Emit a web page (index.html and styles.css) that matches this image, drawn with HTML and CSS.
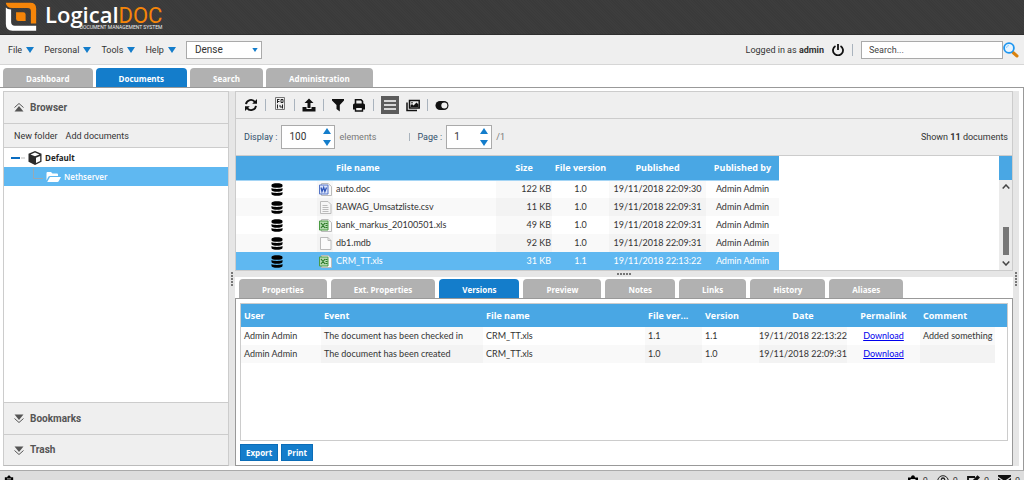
FILE: index.html
```html
<!DOCTYPE html>
<html lang="en">
<head>
<meta charset="utf-8">
<title>LogicalDOC</title>
<link rel="stylesheet" href="styles.css">
</head>
<body>
<svg class="defs" width="0" height="0" aria-hidden="true">
  <symbol id="caret" viewBox="0 0 8 6"><path d="M0 0h8L4 6z" fill="#147dcb"/></symbol>
  <symbol id="up" viewBox="0 0 8 6"><path d="M0 6h8L4 0z" fill="#147dcb"/></symbol>
  <symbol id="chev" viewBox="0 0 10 9"><path d="M.5 4.500L5 .5l4.500 4" fill="none" stroke="#555"/><path d="M.5 8.500L5 3l4.500 5.500z" fill="#555"/></symbol>
  <symbol id="db" viewBox="0 0 12 13"><path d="M.5 2C.5.8 3 .2 6 .2s5.500.6 5.500 1.800v1.200C11.500 4.200 9 4.800 6 4.800S.5 4.200.5 3.200zM.5 5c2 1.200 9 1.200 11 0v2c0 1.200-2.500 1.800-5.500 1.800S.5 8.200.5 7zM.5 9c2 1.200 9 1.200 11 0v2c0 1.200-2.500 1.800-5.500 1.800S.5 12.200.5 11z"/></symbol>
  <symbol id="page" viewBox="0 0 13 13"><path d="M1.500.5h7.500l3 3v9H1.500z" fill="#fbfbfb" stroke="#bbb"/><path d="M9 .5v3h3" fill="none" stroke="#bbb"/></symbol>
  <symbol id="doc" viewBox="0 0 13 13"><path d="M2.500.5H9l3.500 3v9h-10z" fill="#fafafa" stroke="#bbb"/><path d="M.5 2h8.500v9H.5z" fill="#dce5fb" stroke="#5475c7"/><path d="M2 4.500l1 4 1.700-4 1.200 4 1.600-4" fill="none" stroke="#2f55b8" stroke-width="1.300"/></symbol>
  <symbol id="xls" viewBox="0 0 13 13"><path d="M2.500.5H9l3.500 3v9h-10z" fill="#fafafa" stroke="#bbb"/><path d="M.5 2h8.500v9H.5z" fill="#b4dab0" stroke="#4b9b43"/><path d="M2 4l4 5M6 4L2 9M6.500 4.500h2M6.500 6.500h2M6.500 8.500h2" fill="none" stroke="#2c7a28" stroke-width="1.200"/></symbol>
  <symbol id="csv" viewBox="0 0 13 13"><path d="M1.500.5h7.500l3 3v9H1.500z" fill="#f6f6f6" stroke="#bbb"/><path d="M3.500 4.500h5M3.500 6.500h6M3.500 8.500h6M3.500 10.500h6" stroke="#bbb"/></symbol>
  <symbol id="clip" viewBox="0 0 12 14"><path d="M1 2.500h3C4.200 1 5 .3 6 .3S7.800 1 8 2.500h3V14H1z"/><path d="M3.500 4.500h5" stroke="#ddd"/></symbol>
</svg>
<div class="app">
  <header class="brand">
    <svg class="brand-mark" viewBox="0 0 96 88" aria-hidden="true">
      <path d="M2 2h74q18 0 18 18v45H78V28q0-10-10-10H26Q4 20 2 2z" fill="#f58509"/>
      <path d="M2 17q4 6 16 6v38q0 11 11 11h65v15H22Q2 87 2 67z" fill="#fff"/>
      <path d="M33 31h22q7 0 7 7v20H40q-7 0-7-7z" fill="#f58509"/>
    </svg>
    <div class="brand-name">
      <span class="logical">Logical</span><span class="doc">DOC</span>
      <small>DOCUMENT MANAGEMENT SYSTEM</small>
    </div>
  </header>

  <div class="menubar">
    <nav class="menus">
      <button>File<svg class="caret"><use href="#caret"/></svg></button>
      <button>Personal<svg class="caret"><use href="#caret"/></svg></button>
      <button>Tools<svg class="caret"><use href="#caret"/></svg></button>
      <button>Help<svg class="caret"><use href="#caret"/></svg></button>
      <div class="select">
        <select aria-label="Density"><option>Dense</option></select>
        <svg class="caret small"><use href="#caret"/></svg>
      </div>
    </nav>
    <div class="account">
      <span>Logged in as <b>admin</b></span>
      <button aria-label="Log out" class="power"><svg width="12" height="12" viewBox="0 0 12 12" fill="none" stroke="#111" stroke-width="1.800"><path d="M3.500 2a5 5 0 1 0 5 0M6 0v6"/></svg></button>
      <i class="sep"></i>
      <form class="search">
        <input type="text" placeholder="Search..." aria-label="Search">
        <button type="button" aria-label="Run search"><svg width="16" height="16" viewBox="0 0 16 16" fill="none"><path d="M10 10.500l4 3.500" stroke="#d9820f" stroke-width="3" stroke-linecap="round"/><circle cx="6" cy="6" r="4.900" stroke="#1e96f0" stroke-width="1.800" fill="#e8f5ff"/><path d="M3.500 6q0-2.500 2.500-2.500" stroke="#8ccbfa"/></svg></button>
      </form>
    </div>
  </div>

  <nav class="tabs main-tabs">
    <button>Dashboard</button><button class="on">Documents</button><button>Search</button><button>Administration</button>
  </nav>

  <main class="workspace">
    <aside class="sidebar">
      <button class="section"><svg class="chev"><use href="#chev"/></svg>Browser</button>
      <div class="side-tools"><button>New folder</button><button>Add documents</button></div>
      <div class="tree">
        <div class="node root">
          <svg width="14" height="12" viewBox="0 0 14 12" fill="none"><path d="M0 6h9" stroke="#0a6cc0" stroke-width="2"/><path d="M10 6h4" stroke="#bbb"/></svg>
          <svg width="14" height="14" viewBox="0 0 14 14"><path d="M7 0l6.500 2.800v8L7 14 .5 10.800v-8z" fill="#2b2b2b"/><path d="M7 1.500l4.500 2L7 5.200 2.500 3.500zM8 6.700l4.200-1.800v5L8 12z" fill="#fff"/></svg>
          <span>Default</span>
        </div>
        <div class="node child">
          <svg width="10" height="18" viewBox="0 0 10 18" fill="none" stroke="#98a9b5"><path d="M.5 0v10.500H10"/></svg>
          <svg width="15" height="12" viewBox="0 0 15 12" fill="#fff"><path d="M.5 9.500V2q0-1 1-1h3.500l1.500 1.500h4.500q1 0 1 1V5H4q-1.200 0-1.800 1z"/><path d="M4 6h11l-2.300 4.300q-.4.700-1.200.700H1.200z"/></svg>
          <span>Nethserver</span>
        </div>
      </div>
      <button class="section"><svg class="chev flip"><use href="#chev"/></svg>Bookmarks</button>
      <button class="section"><svg class="chev flip"><use href="#chev"/></svg>Trash</button>
    </aside>

    <div class="vsplit"><i></i></div>

    <div class="content">
      <section class="list-pane">
        <div class="toolbar">
          <button aria-label="Refresh"><svg width="14" height="14" viewBox="0 0 14 14" fill="none" stroke="#111" stroke-width="1.900"><path d="M2 6.200A5 5 0 0 1 11 4M12 7.800A5 5 0 0 1 3 10"/><path d="M13 1v4.800H8.200zM1 13V8.200h4.800z" fill="#111" stroke="none"/></svg></button>
          <i class="sep"></i>
          <button aria-label="Binary" class="raised"><svg width="12" height="13" viewBox="0 0 12 13" fill="none" stroke="#222"><path d="M1.500.5h9v12h-9z" stroke="#777"/><path d="M3.500 2v4M3.500 2.500h2M3.500 4.500h2M7 2.500h2v3H7zM3.500 7.500v4M6 8v2h2.500M8.500 7.500v4"/></svg></button>
          <i class="sep"></i>
          <button aria-label="Upload"><svg width="14" height="14" viewBox="0 0 14 14"><path d="M7 .5L11.500 5H8.500v5h-3V5h-3zM.5 9h4v2h5V9h4v4.500H.5z" fill="#111"/></svg></button>
          <i class="sep"></i>
          <button aria-label="Filter"><svg width="14" height="14" viewBox="0 0 14 14"><path d="M1 1h12v1.500L8.800 7v6.500L5.500 11V7L1 2.500z" fill="#111"/></svg></button>
          <button aria-label="Print"><svg width="14" height="14" viewBox="0 0 14 14"><path d="M3.500 6V1.800h5.500l1.500 1.500V6" fill="none" stroke="#111" stroke-width="1.600"/><path d="M1 7q0-1.500 1.500-1.500h9Q13 5.500 13 7v4.500h-2V9H3v2.500H1z" fill="#111"/><path d="M3.500 9.200h7V13h-7z" fill="#efefef" stroke="#111" stroke-width="1.400"/></svg></button>
          <i class="sep"></i>
          <button aria-label="List view" class="active"><svg width="12" height="12" viewBox="0 0 12 12"><path d="M0 2h12M0 6h12M0 10h12" stroke="#fff" stroke-width="1.500"/></svg></button>
          <button aria-label="Gallery view"><svg width="14" height="14" viewBox="0 0 14 14" fill="none" stroke="#111" stroke-width="1.500"><path d="M3.500 2.500h9.700v7.500H3.500zM1 4.500v8h10"/><path d="M4.500 9V7.500L6 6l1.500 1.500L10.500 4.500l2 2V9z" fill="#111" stroke="none"/><circle cx="6" cy="4.700" r=".8" fill="#111" stroke="none"/></svg></button>
          <i class="sep"></i>
          <button aria-label="Toggle preview"><svg width="14" height="14" viewBox="0 0 14 14"><rect x=".5" y="3" width="13" height="9" rx="4.500" fill="#111"/><circle cx="9.300" cy="7.500" r="3" fill="#efefef"/></svg></button>
        </div>
        <div class="paging">
          <label for="display">Display :</label>
          <div class="spin wide"><input id="display" type="text" value="100"><span><svg class="caret"><use href="#up"/></svg><svg class="caret"><use href="#caret"/></svg></span></div>
          <span class="muted">elements</span>
          <i class="sep short"></i>
          <label for="pageno">Page :</label>
          <div class="spin"><input id="pageno" type="text" value="1"><span><svg class="caret"><use href="#up"/></svg><svg class="caret"><use href="#caret"/></svg></span></div>
          <span class="muted">/1</span>
          <span class="shown">Shown <b>11</b> documents</span>
        </div>
        <div class="files">
          <table class="grid file-grid">
            <colgroup><col class="c-state"><col class="c-icon"><col class="c-name"><col class="c-size"><col class="c-fver"><col class="c-pub"><col class="c-by"></colgroup>
            <thead><tr><th></th><th></th><th>File name</th><th class="mid">Size</th><th class="mid">File version</th><th class="mid">Published</th><th class="mid">Published by</th></tr></thead>
            <tbody>
              <tr><td class="mid"><svg class="db"><use href="#db"/></svg></td><td class="shade mid"><svg class="ft"><use href="#doc"/></svg></td><td>auto.doc</td><td class="shade num">122 KB</td><td class="mid">1.0</td><td class="shade mid">19/11/2018 22:09:30</td><td class="mid">Admin Admin</td></tr>
              <tr><td class="mid"><svg class="db"><use href="#db"/></svg></td><td class="shade mid"><svg class="ft"><use href="#csv"/></svg></td><td>BAWAG_Umsatzliste.csv</td><td class="shade num">11 KB</td><td class="mid">1.0</td><td class="shade mid">19/11/2018 22:09:31</td><td class="mid">Admin Admin</td></tr>
              <tr><td class="mid"><svg class="db"><use href="#db"/></svg></td><td class="shade mid"><svg class="ft"><use href="#xls"/></svg></td><td>bank_markus_20100501.xls</td><td class="shade num">49 KB</td><td class="mid">1.0</td><td class="shade mid">19/11/2018 22:09:31</td><td class="mid">Admin Admin</td></tr>
              <tr><td class="mid"><svg class="db"><use href="#db"/></svg></td><td class="shade mid"><svg class="ft"><use href="#page"/></svg></td><td>db1.mdb</td><td class="shade num">92 KB</td><td class="mid">1.0</td><td class="shade mid">19/11/2018 22:09:31</td><td class="mid">Admin Admin</td></tr>
              <tr class="sel"><td class="mid"><svg class="db"><use href="#db"/></svg></td><td class="mid"><svg class="ft"><use href="#xls"/></svg></td><td>CRM_TT.xls</td><td class="num">31 KB</td><td class="mid">1.1</td><td class="mid">19/11/2018 22:13:22</td><td class="mid">Admin Admin</td></tr>
            </tbody>
          </table>
          <div class="scroll">
            <div class="corner"></div>
            <div class="track">
              <svg width="8" height="5" viewBox="0 0 8 5" fill="none" stroke="#444" stroke-width="1.500"><path d="M.7 4.500L4 1l3.300 3.500"/></svg>
              <i></i>
              <svg width="8" height="5" viewBox="0 0 8 5" fill="none" stroke="#444" stroke-width="1.500"><path d="M.7.5L4 4 7.300.5"/></svg>
            </div>
          </div>
        </div>
      </section>

      <div class="hsplit"><i></i></div>

      <section class="detail">
        <nav class="tabs sub-tabs">
          <button>Properties</button><button>Ext. Properties</button><button class="on">Versions</button><button>Preview</button><button>Notes</button><button>Links</button><button>History</button><button>Aliases</button>
        </nav>
        <div class="detail-body">
          <div class="versions">
            <table class="grid ver-grid">
              <colgroup><col class="v-user"><col class="v-event"><col class="v-event"><col class="v-ver"><col class="v-ver"><col class="v-date"><col class="v-link"><col class="v-comment"><col></colgroup>
              <thead><tr><th>User</th><th>Event</th><th>File name</th><th>File ver...</th><th>Version</th><th class="mid">Date</th><th class="mid">Permalink</th><th>Comment</th><th></th></tr></thead>
              <tbody>
                <tr><td>Admin Admin</td><td class="shade">The document has been checked in</td><td>CRM_TT.xls</td><td class="shade">1.1</td><td>1.1</td><td class="shade mid">19/11/2018 22:13:22</td><td class="mid"><a href="#">Download</a></td><td class="shade">Added something</td><td class="rest"></td></tr>
                <tr><td>Admin Admin</td><td class="shade">The document has been created</td><td>CRM_TT.xls</td><td class="shade">1.0</td><td>1.0</td><td class="shade mid">19/11/2018 22:09:31</td><td class="mid"><a href="#">Download</a></td><td class="shade"></td><td class="rest"></td></tr>
              </tbody>
            </table>
          </div>
          <div class="actions"><button>Export</button><button>Print</button></div>
        </div>
      </section>
    </div>

    <div class="vsplit right"><i></i></div>
  </main>

  <footer class="status">
    <svg class="first" width="10" height="12"><use href="#clip"/></svg>
    <span><svg width="12" height="14"><use href="#clip"/></svg>0</span>
    <span><svg width="12" height="12" viewBox="0 0 12 12" fill="none" stroke="#222"><circle cx="6" cy="6" r="5.300"/><path d="M4.200 4.800Q4.500 3 6 3t1.700 1.500Q7.700 5.500 6 6.500V8" stroke-width="1.300"/></svg>0</span>
    <span><svg width="13" height="13" viewBox="0 0 13 13"><path d="M8 2H1v10h9V8" fill="none" stroke="#111" stroke-width="1.800"/><path d="M4 9l.5-2.500L10.500.3 13 2.600 6.500 8.800z" fill="#111"/></svg>0</span>
    <span><svg width="13" height="11" viewBox="0 0 13 11"><path d="M0 0h13v1.500L6.500 6 0 1.500zM0 3l6.500 4.500L13 3v8H0z" fill="#111"/></svg>0</span>
  </footer>
</div>
</body>
</html>
```

FILE: styles.css
```css
* { box-sizing: border-box; }
body { margin: 0; background: #fff; color: #333; font: 9px/12px Roboto, "Open Sans", sans-serif; }
button, input, select { font: inherit; color: inherit; }
button { padding: 0; border: 0; background: none; white-space: nowrap; }
svg { display: block; flex: none; }
.defs { position: absolute; }
.app { display: flex; flex-direction: column; height: 100vh; overflow: hidden; }

.brand { flex: none; display: flex; gap: 8px; height: 35px; padding: 2px 5px; background: repeating-linear-gradient(45deg, #3a3a3a 0 1px, #3d3d3d 1px 2px); border-bottom: 1px solid #2f2f2f; }
.brand-mark { width: 32px; height: 29px; }
.brand-name { display: grid; grid-template-columns: auto auto; grid-template-rows: 20px 6px; align-items: baseline; justify-content: start; padding-top: 2px; line-height: 20px; }
.logical { color: #fff; font-family: "Open Sans", sans-serif; font-size: 22px; font-weight: 600; }
.brand-name .doc { color: #f58509; font-size: 22px; }
.brand-name small { grid-column: 1 / 3; justify-self: end; color: #eee; font: 5px/6px Roboto, sans-serif; }

.menubar { flex: none; display: flex; justify-content: space-between; align-items: center; height: 30px; padding: 0 5px 0 8px; background: #efefef; border-bottom: 1px solid #d6d6d6; }
.menus { display: flex; align-items: center; gap: 10px; }
.menus button { display: flex; align-items: center; gap: 4px; }
.caret { width: 8px; height: 6px; }
.caret.small { width: 6px; height: 4px; }
.select { display: grid; grid-template-columns: 1fr 6px 4px; align-items: center; width: 76px; }
.select select { grid-area: 1 / 1 / 2 / 4; height: 18px; padding: 0 8px; border: 1px solid #aaa; background: #fff; appearance: none; border-radius: 0; font-size: 10px; }
.select svg { grid-area: 1 / 2; }
.account { display: flex; align-items: center; gap: 8px; }
.sep { width: 1px; height: 12px; background: #a9b3bd; }
.search { display: flex; align-items: center; margin: 0; }
.search input { width: 142px; height: 18px; padding: 0 7px; border: 1px solid #aaa; background: #fff; }
.search input::placeholder { color: #444; opacity: 1; }

.tabs { flex: none; display: flex; gap: 4px; padding: 3px 3px 0; border-bottom: 1px solid #999; }
.tabs button { height: 19px; padding: 3px 23px 0; border-radius: 4px 4px 0 0; background: #b1b1b1; color: #fff; font: bold 8px/12px "Open Sans", sans-serif; }
.tabs .on { background: #147dcb; }
.main-tabs { gap: 3px; }

.workspace { flex: 1; min-height: 0; display: grid; grid-template-columns: 226px 6px minmax(0, 1fr) 6px; padding: 3px 4px 4px 3px; border-right: 1px solid #999; }
.sidebar { display: flex; flex-direction: column; border: 1px solid #ccc; border-bottom-color: #bbb; }
.section { display: flex; align-items: center; gap: 6px; height: 31px; padding: 0 10px; background: #efefef; color: #555; font-size: 10px; font-weight: 700; }
.section + .section { border-top: 1px solid #ccc; }
.chev { width: 10px; height: 9px; }
.flip { transform: scaleY(-1); }
.side-tools { display: flex; align-items: center; gap: 8px; height: 25px; padding: 0 10px; background: #efefef; border-top: 1px solid #ccc; border-bottom: 1px solid #ccc; }
.tree { flex: 1; background: #fff; border-bottom: 1px solid #ccc; font: 8px/19px "Open Sans", sans-serif; }
.node { display: flex; align-items: center; gap: 3px; height: 19px; }
.root { padding-left: 7px; font-weight: 700; color: #222; }
.child { padding-left: 29px; background: #5fb8f1; color: #fff; font-weight: 600; }
.vsplit { display: flex; align-items: center; justify-content: center; background: #e6e6e6; }
.vsplit i { width: 2px; height: 14px; background: repeating-linear-gradient(#777 0 2px, transparent 2px 3px); }

.content { display: flex; flex-direction: column; min-width: 0; }
.list-pane { flex: none; border: 1px solid #ccc; }
.toolbar { display: flex; align-items: center; gap: 7px; height: 27px; padding: 0 8px; background: #efefef; border-bottom: 1px solid #ccc; }
.toolbar button { display: grid; place-items: center; width: 14px; height: 18px; }
.toolbar .raised { padding-bottom: 4px; }
.toolbar .active { width: 18px; background: #5b5b5b; }
.paging { display: flex; align-items: center; gap: 4px; height: 37px; padding: 0 4px 0 8px; background: #efefef; border-bottom: 1px solid #ccc; }
.paging label { color: #32506b; }
.muted { color: #777; }
.shown { margin-left: auto; }
.sep.short { height: 8px; margin: 0 3px 0 29px; }
.spin { display: flex; align-items: center; width: 46px; height: 24px; padding-right: 3px; border: 1px solid #aaa; background: #fff; }
.spin.wide { width: 54px; }
.spin input { flex: 1; min-width: 0; padding: 0 0 0 7px; border: 0; background: none; font-size: 10px; }
.spin span { display: grid; gap: 6px; }

.files { display: flex; justify-content: space-between; background: #fff; }
.grid { table-layout: fixed; border-collapse: collapse; font: 9px/12px Lato, "Open Sans", sans-serif; color: #333; }
.grid th { height: 23px; padding: 0 0 0 3px; background: #49a7e4; color: #fff; font: bold 9px/12px "Open Sans", sans-serif; text-align: left; white-space: nowrap; }
.grid td { height: 18px; padding: 0 0 0 3px; white-space: nowrap; }
.grid .mid { padding: 0; text-align: center; }
.grid td svg { margin: 0 auto; }
.grid .num { padding: 0 1px 0 0; text-align: right; }
.grid .shade { background: #f9f9f9; }
.grid tbody tr:nth-child(even) { background: #f9f9f9; }
.grid tbody tr:nth-child(even) .shade { background: #f3f3f3; }
.grid tbody .sel { background: #5fb8f1; color: #fff; }
.file-grid { width: 543px; }
.file-grid th { height: 24px; }
.file-grid thead { border-bottom: 1px solid #a5d5f5; }
.c-state { width: 81px; }
.c-icon { width: 16px; }
.c-name { width: 163px; }
.c-size { width: 56px; }
.c-fver { width: 57px; }
.c-pub { width: 97px; }
.db { width: 12px; height: 13px; color: #111; }
.ft { width: 13px; height: 13px; }
.scroll { display: flex; flex-direction: column; width: 13px; }
.corner { height: 24px; background: #49a7e4; }
.track { flex: 1; display: flex; flex-direction: column; align-items: center; padding: 4px 0; background: #ebebeb; }
.track i { width: 6px; height: 28px; margin: auto 0 6px; background: #777; }

.hsplit { flex: none; display: grid; place-items: center; height: 6px; background: #e6e6e6; }
.hsplit i { width: 14px; height: 2px; background: repeating-linear-gradient(90deg, #777 0 2px, transparent 2px 3px); }
.detail { flex: 1; min-height: 0; display: flex; flex-direction: column; }
.sub-tabs { padding: 2px 4px 0; }
.detail-body { flex: 1; min-height: 0; display: flex; flex-direction: column; gap: 3px; padding: 4px; border: 1px solid #999; border-top: 0; }
.versions { flex: 1; min-height: 0; border: 1px solid #ccc; overflow: hidden; }
.ver-grid { width: 100%; }
.ver-grid .rest { background: #fff; }
.ver-grid a { color: #0000ee; text-decoration: underline; }
.v-user { width: 80px; }
.v-event { width: 162px; }
.v-ver { width: 57px; }
.v-date { width: 88px; }
.v-link { width: 73px; }
.v-comment { width: 75px; }
.actions { display: flex; gap: 3px; }
.actions button { height: 17px; padding: 0 5px; border: 1px solid #0b6db8; background: #147dcb; color: #fff; font: bold 8px/12px "Open Sans", sans-serif; }

.status { flex: none; display: flex; justify-content: flex-end; align-items: flex-start; gap: 9px; height: 10px; padding: 4px 4px 0; overflow: hidden; background: #ddd; border-top: 1px solid #aaa; }
.status span { display: flex; gap: 4px; }
.status .first { margin-right: auto; }
```
